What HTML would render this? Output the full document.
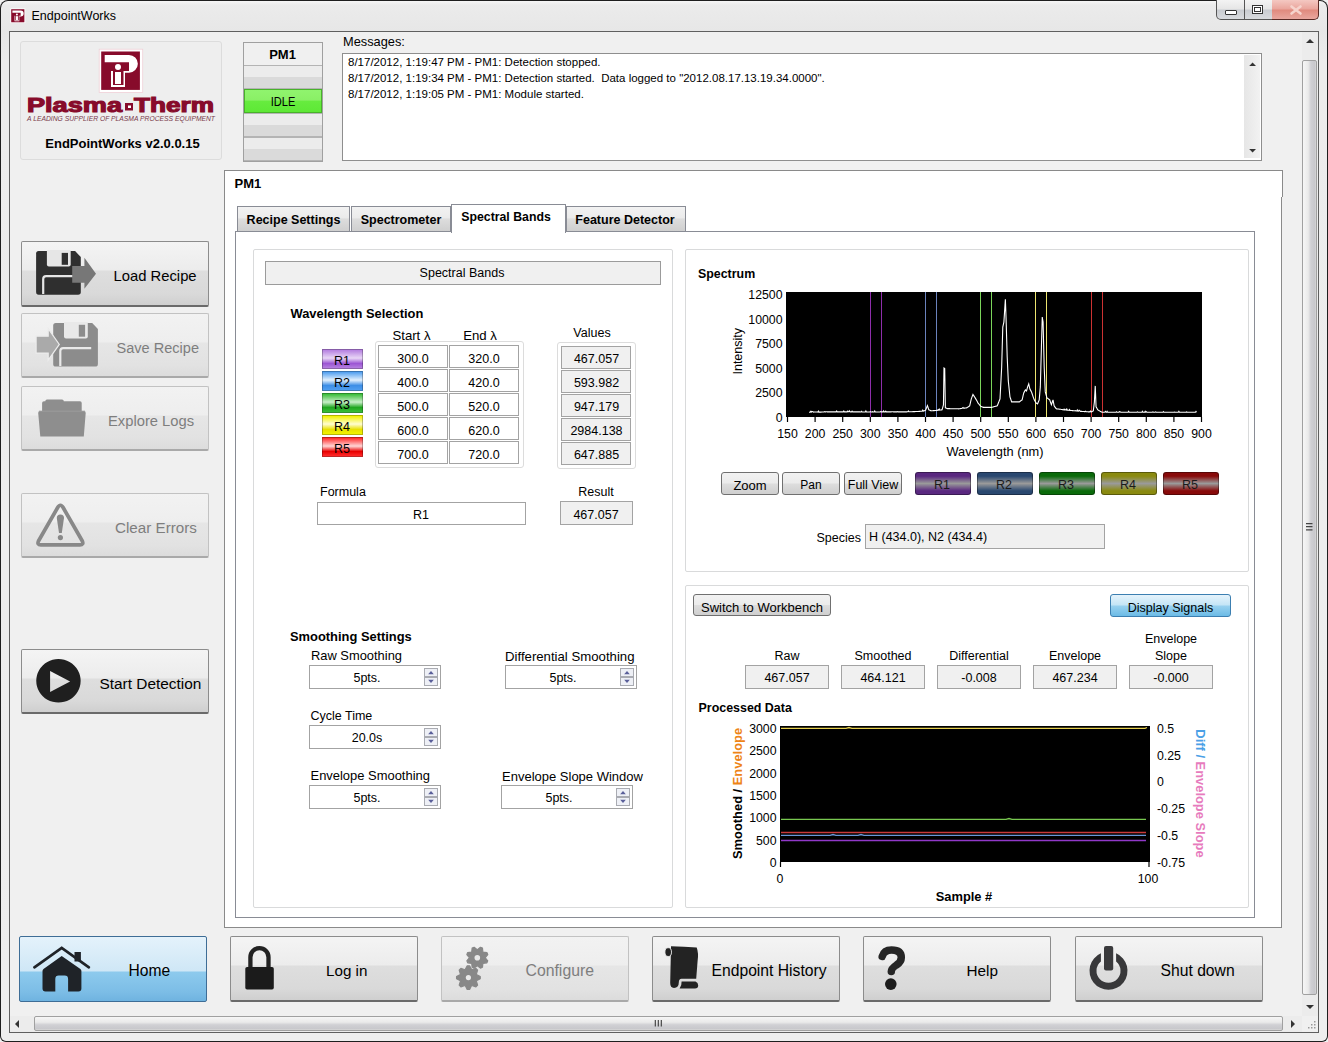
<!DOCTYPE html>
<html><head><meta charset="utf-8"><style>
html,body{margin:0;padding:0;width:1328px;height:1042px;overflow:hidden;background:#f0f0f0}
.a{position:absolute;box-sizing:content-box}
.t{font-family:"Liberation Sans", sans-serif;line-height:1;white-space:nowrap}
svg.a{overflow:visible}
</style></head><body>
<div class="a" style="left:0;top:0;width:1328px;height:1042px;background:#1e1e1e;border-radius:8px 8px 6px 6px"></div>
<div class="a" style="left:1px;top:1px;width:1326px;height:1040px;background:linear-gradient(180deg,#f6f6f6 0px,#ebebeb 4px,#e7e7e7 30px,#ececec 60px,#eeeeee 100%);border-radius:7px 7px 5px 5px"></div>
<svg class="a" style="left:10px;top:8px;" width="16" height="16" viewBox="0 0 16 16"><g transform="translate(-0.9,-1.0) scale(0.34)"><rect x="4.2" y="4.2" width="43.5" height="43.2" fill="#fff"/><rect x="6.2" y="6.5" width="38.7" height="38.4" fill="#870b2b"/><path d="M9.7 10 H34 A8.85 8.85 0 0 1 34 27.7 H30 V26 H34 V17.2 H9.7 Z" fill="#fff"/><path d="M16 26 H18 V40 H28.5 V26 H30 V42 H16 Z" fill="#fff"/><rect x="20" y="27" width="6" height="12" fill="#fff"/><circle cx="23" cy="22" r="3" fill="#fff"/></g></svg>
<div class="a t" style="left:31.5px;top:9.72px;font-size:12.5px;font-weight:normal;color:#000;">EndpointWorks</div>
<div class="a" style="left:1216px;top:0px;width:55px;height:19px;border:1px solid #555;border-top:none;border-radius:0 0 0 5px;background:linear-gradient(180deg,#f3f3f3 0,#e6e6e6 9px,#c9ccd1 10px,#d9dbde 100%)"></div>
<div class="a" style="left:1244px;top:0px;width:1px;height:20px;background:#555"></div>
<div class="a" style="left:1272px;top:0px;width:46px;height:19px;border:1px solid #5a2a25;border-top:none;border-left:none;border-radius:0 0 5px 0;background:linear-gradient(180deg,#f4c8c2 0,#eaa59c 9px,#e08a7e 10px,#e9a79e 100%)"></div>
<div class="a" style="left:1225px;top:10px;width:10px;height:3px;border:1px solid #333;background:#fff;border-radius:1px"></div>
<div class="a" style="left:1252px;top:5px;width:9px;height:7px;border:1px solid #333;background:#fff"></div>
<div class="a" style="left:1254px;top:7px;width:5px;height:3px;border:1px solid #333;background:#fff"></div>
<svg class="a" style="left:1290px;top:5px;" width="12" height="10" viewBox="0 0 12 10"><path d="M1.5 1.5 L10.5 8.5 M10.5 1.5 L1.5 8.5" stroke="#f6d3cc" stroke-width="2.6" stroke-linecap="round"/></svg>
<div class="a" style="left:9px;top:31px;width:1308px;height:1000px;border:1px solid #5f5f5f;background:#f0f0f0"></div>
<div class="a" style="left:20px;top:41px;width:200px;height:117px;border:1px solid #dcdcdc;border-radius:3px;background:#eeeeee"></div>
<svg class="a" style="left:95px;top:45px;" width="52" height="52" viewBox="0 0 52 52"><rect x="4.2" y="4.2" width="43.5" height="43.2" fill="#fff" stroke="#f0d0d8" stroke-width="0.8"/>
<rect x="6.2" y="6.5" width="38.7" height="38.4" fill="#870b2b"/>
<path d="M9.7 10 H34 A8.85 8.85 0 0 1 34 27.7 H30 V26 H34 V17.2 H9.7 Z" fill="#fff"/>
<path d="M16 26 H18 V40 H28.5 V26 H30 V42 H16 Z" fill="#fff"/>
<rect x="20" y="27" width="6" height="12" fill="#fff"/>
<circle cx="23" cy="22" r="3" fill="#fff"/></svg>
<svg class="a" style="left:0px;top:90px;" width="240" height="40" viewBox="0 0 240 40"><text x="27" y="22" font-family="Liberation Sans" font-weight="bold" font-size="19.5" fill="#870b2b" stroke="#870b2b" stroke-width="1.1" textLength="95" lengthAdjust="spacingAndGlyphs">Plasma</text>
<rect x="125" y="13" width="8" height="7.5" fill="#870b2b"/><rect x="128" y="15.5" width="3" height="2.5" fill="#fff"/>
<text x="134" y="22" font-family="Liberation Sans" font-weight="bold" font-size="19.5" fill="#870b2b" stroke="#870b2b" stroke-width="1.1" textLength="80" lengthAdjust="spacingAndGlyphs">Therm</text>
<text x="27" y="31" font-family="Liberation Sans" font-style="italic" font-size="7" fill="#7a3a4a" textLength="188" lengthAdjust="spacingAndGlyphs">A LEADING SUPPLIER OF PLASMA PROCESS EQUIPMENT</text></svg>
<div class="a t" style="left:22.50px;width:200px;text-align:center;top:137.00px;font-size:13px;font-weight:bold;color:#000;">EndPointWorks v2.0.0.15</div>
<div class="a" style="left:243px;top:42px;width:78px;height:118px;border:1px solid #a0a0a0;background:#b4b4b4"></div>
<div class="a" style="left:244px;top:43px;width:78px;height:22px;background:#f0f0f0"></div>
<div class="a t" style="left:242.50px;width:80px;text-align:center;top:48.00px;font-size:13px;font-weight:bold;color:#000;">PM1</div>
<div class="a" style="left:244px;top:66px;width:78px;height:22px;background:linear-gradient(180deg,#ececec 0,#ececec 50%,#dadada 50%,#dadada 100%)"></div>
<div class="a" style="left:244px;top:89px;width:76px;height:22px;border:1px solid #48b22a;background:linear-gradient(180deg,#90f46e 0,#8af066 45%,#66ec3e 52%,#5ee836 100%)"></div>
<div class="a t" style="left:242.50px;width:80px;text-align:center;top:95.84px;font-size:12px;font-weight:normal;color:#000;transform:scaleX(0.92)">IDLE</div>
<div class="a" style="left:244px;top:114px;width:78px;height:22px;background:linear-gradient(180deg,#ececec 0,#ececec 50%,#dadada 50%,#dadada 100%)"></div>
<div class="a" style="left:244px;top:138px;width:78px;height:22px;background:linear-gradient(180deg,#ececec 0,#ececec 50%,#dadada 50%,#dadada 100%)"></div>
<div class="a t" style="left:343px;top:36.16px;font-size:12.8px;font-weight:normal;color:#000;">Messages:</div>
<div class="a" style="left:342px;top:53px;width:918px;height:106px;border:1px solid #8e8e8e;background:#fff"></div>
<div class="a" style="left:1244px;top:55px;width:16px;height:103px;background:linear-gradient(90deg,#e6e6e6,#f2f2f2)"></div>
<svg class="a" style="left:1248px;top:60px;" width="10" height="8" viewBox="0 0 10 8"><path d="M1.2 6 L4.6 2.4 L8 6 Z" fill="#333"/></svg>
<svg class="a" style="left:1248px;top:147px;" width="10" height="8" viewBox="0 0 10 8"><path d="M1.2 2 L4.6 5.6 L8 2 Z" fill="#333"/></svg>
<div class="a t" style="left:348px;top:57.27px;font-size:11.5px;font-weight:normal;color:#000;">8/17/2012, 1:19:47 PM - PM1: Detection stopped.</div>
<div class="a t" style="left:348px;top:73.27px;font-size:11.5px;font-weight:normal;color:#000;">8/17/2012, 1:19:34 PM - PM1: Detection started.&nbsp; Data logged to "2012.08.17.13.19.34.0000".</div>
<div class="a t" style="left:348px;top:89.27px;font-size:11.5px;font-weight:normal;color:#000;">8/17/2012, 1:19:05 PM - PM1: Module started.</div>
<div class="a" style="left:21px;top:241px;width:186px;height:63px;border:1px solid #8c8c8c;border-bottom:2px solid #6a6a6a;border-radius:2px;background:linear-gradient(180deg,#f4f4f4 0,#ececec 28px,#dedede 29px,#d9d9d9 52px,#cfcfcf 100%)"></div>
<div class="a" style="left:21px;top:313px;width:186px;height:62px;border:1px solid #c2c2c2;border-bottom:2px solid #a9a9a9;border-radius:2px;background:linear-gradient(180deg,#f2f2f2 0,#eeeeee 28px,#e6e6e6 29px,#e2e2e2 51px,#dcdcdc 100%)"></div>
<div class="a" style="left:21px;top:386px;width:186px;height:62px;border:1px solid #c2c2c2;border-bottom:2px solid #a9a9a9;border-radius:2px;background:linear-gradient(180deg,#f2f2f2 0,#eeeeee 28px,#e6e6e6 29px,#e2e2e2 51px,#dcdcdc 100%)"></div>
<div class="a" style="left:21px;top:493px;width:186px;height:62px;border:1px solid #c2c2c2;border-bottom:2px solid #a9a9a9;border-radius:2px;background:linear-gradient(180deg,#f2f2f2 0,#eeeeee 28px,#e6e6e6 29px,#e2e2e2 51px,#dcdcdc 100%)"></div>
<div class="a" style="left:21px;top:649px;width:186px;height:62px;border:1px solid #8c8c8c;border-bottom:2px solid #6a6a6a;border-radius:2px;background:linear-gradient(180deg,#f4f4f4 0,#ececec 28px,#dedede 29px,#d9d9d9 51px,#cfcfcf 100%)"></div>
<svg class="a" style="left:30px;top:245px;" width="70" height="55" viewBox="0 0 70 55"><g transform="translate(6.1,6.1)"><path d="M2.5 0 H39 L44.7 6 V41 Q44.7 43.6 42 43.6 H2.5 Q0 43.6 0 41 V2.5 Q0 0 2.5 0 Z" fill="#2f2f2f"/>
<path d="M10.8 -1 H34.6 V13.5 Q34.6 15.5 32.6 15.5 H12.8 Q10.8 15.5 10.8 13.5 Z" fill="#e6e6e6"/>
<rect x="25.6" y="1.8" width="6.3" height="11.9" fill="#2f2f2f"/>
<path d="M7.1 43 V28 Q7.1 25.1 10 25.1 H37" fill="none" stroke="#e6e6e6" stroke-width="2.2"/></g><path d="M42.2 20.9 H54.4 V12.7 L66 28.8 L54.4 43.8 V37.8 H42.2 Z" fill="#777"/></svg>
<div class="a t" style="left:113.5px;top:269.47px;font-size:14.8px;font-weight:normal;color:#000;">Load Recipe</div>
<svg class="a" style="left:30px;top:318px;" width="70" height="55" viewBox="0 0 70 55"><g transform="translate(23.2,5)"><path d="M2.5 0 H39 L44.7 6 V41 Q44.7 43.6 42 43.6 H2.5 Q0 43.6 0 41 V2.5 Q0 0 2.5 0 Z" fill="#8c8c8c"/>
<path d="M10.8 -1 H34.6 V13.5 Q34.6 15.5 32.6 15.5 H12.8 Q10.8 15.5 10.8 13.5 Z" fill="#e9e9e9"/>
<rect x="25.6" y="1.8" width="6.3" height="11.9" fill="#8c8c8c"/>
<path d="M7.1 43 V28 Q7.1 25.1 10 25.1 H38" fill="none" stroke="#e9e9e9" stroke-width="2.2"/></g><path d="M6.1 18.2 H18.2 V10.6 L29.3 26.4 L18.2 42.2 V35.1 H6.1 Z" fill="#aaa" stroke="#ececec" stroke-width="1.2" stroke-linejoin="miter"/></svg>
<div class="a t" style="left:116.5px;top:340.68px;font-size:14.55px;font-weight:normal;color:#7e7e7e;">Save Recipe</div>
<svg class="a" style="left:30px;top:390px;" width="60" height="55" viewBox="0 0 60 55"><path d="M12.1 21 V13 Q12.1 11.3 14 11.3 H15.3 Q15.3 9.5 17 9.5 H32 Q33.8 9.5 33.8 11.3 H50 Q51.7 11.3 51.7 13 V21 H54 Q55.7 21 55.7 23 L53.8 46.4 H10.3 L8.2 23 Q8.2 21 10 21 Z" fill="#8e8e8e"/><path d="M9 21.2 H55" stroke="#9c9c9c" stroke-width="1"/></svg>
<div class="a t" style="left:108px;top:413.51px;font-size:14.75px;font-weight:normal;color:#7e7e7e;">Explore Logs</div>
<svg class="a" style="left:30px;top:497px;" width="60" height="55" viewBox="0 0 60 55"><path d="M27.4 11 Q30.4 5.5 33.4 11 L52.3 44 Q54 47.9 50 47.9 H10.8 Q6.8 47.9 8.5 44 Z" fill="none" stroke="#888" stroke-width="3.7" stroke-linejoin="round"/><path d="M30.4 17.4 Q34 17.4 34 21 L31.8 36.1 H29 L26.8 21 Q26.8 17.4 30.4 17.4 Z" fill="#888"/><circle cx="30.4" cy="40.6" r="2.6" fill="#888"/></svg>
<div class="a t" style="left:115px;top:520.13px;font-size:15.2px;font-weight:normal;color:#7e7e7e;">Clear Errors</div>
<svg class="a" style="left:30px;top:654px;" width="60" height="55" viewBox="0 0 60 55"><path d="M28.5 5 A22.2 21.8 0 1 1 28.4 5 Z M20.1 16.9 L40.1 27.4 L20.1 38 Z" fill="#1f1f1f" fill-rule="evenodd"/></svg>
<div class="a t" style="left:99.5px;top:675.96px;font-size:15.4px;font-weight:normal;color:#000;">Start Detection</div>
<div class="a" style="left:19px;top:936px;width:186px;height:64px;border:1px solid #3e6d96;border-radius:2px;background:linear-gradient(180deg,#e4f2fb 0,#cfe7f6 34px,#8dcaed 35px,#7cbde6 55px,#6fb3e0 100%)"></div>
<svg class="a" style="left:28px;top:940px;" width="70" height="58" viewBox="0 0 70 58"><path d="M6.4 27.3 L33.7 7.8 L60.9 27.3" fill="none" stroke="#1f2328" stroke-width="2.7" stroke-linecap="round" stroke-linejoin="miter"/><rect x="46.5" y="12" width="6.4" height="9.5" fill="#1f2328"/><path d="M14.5 31 Q14.5 29.8 15.5 29 L33.7 16.1 L52.4 29 Q53.4 29.8 53.4 31 V48.5 Q53.4 51.5 50.4 51.5 H40.1 V39 Q40.1 35.6 36.7 35.6 H30.7 Q27.3 35.6 27.3 39 V51.5 H17.5 Q14.5 51.5 14.5 48.5 Z" fill="#1f2328"/></svg>
<div class="a t" style="left:128.5px;top:962.79px;font-size:15.6px;font-weight:normal;color:#000;">Home</div>
<div class="a" style="left:230px;top:936px;width:186px;height:63px;border:1px solid #8c8c8c;border-bottom:2px solid #6a6a6a;border-radius:2px;background:linear-gradient(180deg,#f4f4f4 0,#ececec 28px,#dedede 29px,#d9d9d9 52px,#cfcfcf 100%)"></div>
<svg class="a" style="left:238px;top:940px;" width="44" height="56" viewBox="0 0 44 56"><path d="M12.4 28 V17.2 A9.05 9.05 0 0 1 30.5 17.2 V28" fill="none" stroke="#222" stroke-width="4.3"/><rect x="7.3" y="26.9" width="28.5" height="22.6" rx="1.8" fill="#1b1b1b"/></svg>
<div class="a t" style="left:326px;top:963.13px;font-size:15.2px;font-weight:normal;color:#000;">Log in</div>
<div class="a" style="left:441px;top:936px;width:186px;height:63px;border:1px solid #c2c2c2;border-bottom:2px solid #a9a9a9;border-radius:2px;background:linear-gradient(180deg,#f2f2f2 0,#eeeeee 28px,#e6e6e6 29px,#e2e2e2 52px,#dcdcdc 100%)"></div>
<svg class="a" style="left:448px;top:940px;" width="52" height="56" viewBox="0 0 52 56"><polygon points="37.30,17.80 39.74,20.85 38.90,22.86 35.03,23.28 34.88,23.43 34.46,27.30 32.45,28.14 29.40,25.70 29.20,25.70 26.15,28.14 24.14,27.30 23.72,23.43 23.57,23.28 19.70,22.86 18.86,20.85 21.30,17.80 21.30,17.60 18.86,14.55 19.70,12.54 23.57,12.12 23.72,11.97 24.14,8.10 26.15,7.26 29.20,9.70 29.40,9.70 32.45,7.26 34.46,8.10 34.88,11.97 35.03,12.12 38.90,12.54 39.74,14.55 37.30,17.60" fill="#888" stroke="#888" stroke-width="1.2" stroke-linejoin="round"/><circle cx="29.3" cy="17.7" r="2.8" fill="#e9e9e9"/><polygon points="28.39,34.41 32.24,36.41 32.24,38.79 28.39,40.79 28.30,40.99 29.61,45.13 27.93,46.81 23.79,45.50 23.59,45.59 21.59,49.44 19.21,49.44 17.21,45.59 17.01,45.50 12.87,46.81 11.19,45.13 12.50,40.99 12.41,40.79 8.56,38.79 8.56,36.41 12.41,34.41 12.50,34.21 11.19,30.07 12.87,28.39 17.01,29.70 17.21,29.61 19.21,25.76 21.59,25.76 23.59,29.61 23.79,29.70 27.93,28.39 29.61,30.07 28.30,34.21" fill="#888" stroke="#888" stroke-width="1.2" stroke-linejoin="round"/><circle cx="20.4" cy="37.6" r="2.6" fill="#e9e9e9"/></svg>
<div class="a t" style="left:525.5px;top:962.63px;font-size:15.8px;font-weight:normal;color:#7e7e7e;">Configure</div>
<div class="a" style="left:652px;top:936px;width:186px;height:63px;border:1px solid #8c8c8c;border-bottom:2px solid #6a6a6a;border-radius:2px;background:linear-gradient(180deg,#f4f4f4 0,#ececec 28px,#dedede 29px,#d9d9d9 52px,#cfcfcf 100%)"></div>
<svg class="a" style="left:658px;top:940px;" width="48" height="56" viewBox="0 0 48 56"><path d="M13 6.2 Q26 6.4 38.7 7.5 Q40.8 13 39.6 21 L38.2 38.7 H23.5 Q20.8 38.7 20.8 42.5 Q20.8 47.9 16 47.9 Q12.2 47.9 12.2 43 L13 6.2 Z" fill="#232323"/><ellipse cx="10.2" cy="12.1" rx="3.3" ry="4.4" fill="#232323" stroke="#eee" stroke-width="0.9"/><path d="M21.6 48.5 Q23.8 46 23.6 41.6 H37.5 Q40.2 42.6 40.2 45.5 Q40.2 48.5 37 48.5 Z" fill="#232323"/></svg>
<div class="a t" style="left:711.5px;top:962.71px;font-size:15.7px;font-weight:normal;color:#000;">Endpoint History</div>
<div class="a" style="left:863px;top:936px;width:186px;height:63px;border:1px solid #8c8c8c;border-bottom:2px solid #6a6a6a;border-radius:2px;background:linear-gradient(180deg,#f4f4f4 0,#ececec 28px,#dedede 29px,#d9d9d9 52px,#cfcfcf 100%)"></div>
<svg class="a" style="left:868px;top:940px;" width="48" height="56" viewBox="0 0 48 56"><path d="M14.2 16.5 Q16 10 23.5 10 Q33.3 10 33.3 17.5 Q33.3 22 28.5 25 Q23.3 28.5 23.3 31.5" fill="none" stroke="#262626" stroke-width="7.5" stroke-linecap="round"/><circle cx="22.8" cy="44.1" r="5.8" fill="#1c1c1c"/></svg>
<div class="a t" style="left:966.5px;top:963.05px;font-size:15.3px;font-weight:normal;color:#000;">Help</div>
<div class="a" style="left:1075px;top:936px;width:186px;height:63px;border:1px solid #8c8c8c;border-bottom:2px solid #6a6a6a;border-radius:2px;background:linear-gradient(180deg,#f4f4f4 0,#ececec 28px,#dedede 29px,#d9d9d9 52px,#cfcfcf 100%)"></div>
<svg class="a" style="left:1082px;top:940px;" width="54" height="56" viewBox="0 0 54 56"><path d="M18.9 13.34 A19 19 0 1 0 34.1 13.34 L34.1 21.47 A12 12 0 1 1 18.9 21.47 Z" fill="#38383a"/><rect x="22" y="5.9" width="9.2" height="24.7" rx="2" fill="#3a3a3c"/></svg>
<div class="a t" style="left:1160.5px;top:962.71px;font-size:15.7px;font-weight:normal;color:#000;">Shut down</div>
<div class="a" style="left:224px;top:170px;width:1056px;height:756px;border:1px solid #8a8a8a;background:#fff"></div>
<div class="a" style="left:1280px;top:170px;width:2px;height:26px;border:1px solid #8a8a8a;border-left:none;border-bottom:none;background:#fff"></div>
<div class="a t" style="left:234.5px;top:177.00px;font-size:13px;font-weight:bold;color:#000;">PM1</div>
<div class="a" style="left:235px;top:231px;width:1018px;height:685px;border:1px solid #898c95;background:#fff"></div>
<div class="a" style="left:237px;top:206px;width:111px;height:24px;border:1px solid #898c95;border-bottom:none;background:linear-gradient(180deg,#f2f2f2 0,#ebebeb 45%,#dddddd 50%,#cfcfcf 100%)"></div>
<div class="a t" style="left:237.00px;width:113px;text-align:center;top:214.42px;font-size:12.5px;font-weight:bold;color:#000;">Recipe Settings</div>
<div class="a" style="left:351px;top:206px;width:98px;height:24px;border:1px solid #898c95;border-bottom:none;background:linear-gradient(180deg,#f2f2f2 0,#ebebeb 45%,#dddddd 50%,#cfcfcf 100%)"></div>
<div class="a t" style="left:351.00px;width:100px;text-align:center;top:214.42px;font-size:12.5px;font-weight:bold;color:#000;">Spectrometer</div>
<div class="a" style="left:566px;top:206px;width:118px;height:24px;border:1px solid #898c95;border-bottom:none;background:linear-gradient(180deg,#f2f2f2 0,#ebebeb 45%,#dddddd 50%,#cfcfcf 100%)"></div>
<div class="a t" style="left:565.00px;width:120px;text-align:center;top:214.42px;font-size:12.5px;font-weight:bold;color:#000;">Feature Detector</div>
<div class="a" style="left:451px;top:204px;width:113px;height:28px;border:1px solid #898c95;border-bottom:none;background:#fff;z-index:2"></div>
<div class="a t" style="left:448.50px;width:115px;text-align:center;top:210.59px;font-size:12.3px;font-weight:bold;color:#000;z-index:3">Spectral Bands</div>
<div class="a" style="left:253px;top:249px;width:418px;height:657px;border:1px solid #d9dadb;border-radius:2px;background:#fff"></div>
<div class="a" style="left:265px;top:261px;width:394px;height:22px;border:1px solid #9b9b9b;background:#f0f0f0"></div>
<div class="a t" style="left:312.00px;width:300px;text-align:center;top:267.42px;font-size:12.5px;font-weight:normal;color:#000;">Spectral Bands</div>
<div class="a t" style="left:290.5px;top:308.08px;font-size:12.9px;font-weight:bold;color:#000;">Wavelength Selection</div>
<div class="a t" style="left:361.50px;width:100px;text-align:center;top:328.83px;font-size:13.2px;font-weight:normal;color:#000;">Start &#955;</div>
<div class="a t" style="left:430.00px;width:100px;text-align:center;top:328.83px;font-size:13.2px;font-weight:normal;color:#000;">End &#955;</div>
<div class="a t" style="left:542.00px;width:100px;text-align:center;top:327.42px;font-size:12.5px;font-weight:normal;color:#000;">Values</div>
<div class="a" style="left:322px;top:349px;width:39px;height:18px;border:1px solid rgba(0,0,0,0.25);background:linear-gradient(180deg,#b57fe0 0,#e8d6f6 45%,#9c56d4 75%,#b57fe0 100%)"></div>
<div class="a t" style="left:322.00px;width:40px;text-align:center;top:354.62px;font-size:12.5px;font-weight:normal;color:#000;">R1</div>
<div class="a" style="left:322px;top:371px;width:39px;height:18px;border:1px solid rgba(0,0,0,0.25);background:linear-gradient(180deg,#4f9ef0 0,#e2f0fd 45%,#3d8ee6 75%,#4f9ef0 100%)"></div>
<div class="a t" style="left:322.00px;width:40px;text-align:center;top:376.62px;font-size:12.5px;font-weight:normal;color:#000;">R2</div>
<div class="a" style="left:322px;top:393px;width:39px;height:18px;border:1px solid rgba(0,0,0,0.25);background:linear-gradient(180deg,#39bd39 0,#c9efc9 45%,#21a621 75%,#39bd39 100%)"></div>
<div class="a t" style="left:322.00px;width:40px;text-align:center;top:398.62px;font-size:12.5px;font-weight:normal;color:#000;">R3</div>
<div class="a" style="left:322px;top:415px;width:39px;height:18px;border:1px solid rgba(0,0,0,0.25);background:linear-gradient(180deg,#f2f200 0,#fffdd0 45%,#e8e000 75%,#f2f200 100%)"></div>
<div class="a t" style="left:322.00px;width:40px;text-align:center;top:420.62px;font-size:12.5px;font-weight:normal;color:#000;">R4</div>
<div class="a" style="left:322px;top:437px;width:39px;height:18px;border:1px solid rgba(0,0,0,0.25);background:linear-gradient(180deg,#ff2a2a 0,#ffd6d6 45%,#e80000 75%,#ff2a2a 100%)"></div>
<div class="a t" style="left:322.00px;width:40px;text-align:center;top:442.62px;font-size:12.5px;font-weight:normal;color:#000;">R5</div>
<div class="a" style="left:375px;top:341px;width:147px;height:125px;border:1px solid #dcdcdc;border-radius:3px;background:#fff"></div>
<div class="a" style="left:378px;top:345px;width:68px;height:21px;border:1.5px solid #a3a3a3;background:#fff"></div>
<div class="a" style="left:449px;top:345px;width:68px;height:21px;border:1.5px solid #a3a3a3;background:#fff"></div>
<div class="a t" style="left:378.00px;width:70px;text-align:center;top:352.72px;font-size:12.5px;font-weight:normal;color:#000;">300.0</div>
<div class="a t" style="left:449.00px;width:70px;text-align:center;top:352.72px;font-size:12.5px;font-weight:normal;color:#000;">320.0</div>
<div class="a" style="left:378px;top:369px;width:68px;height:21px;border:1.5px solid #a3a3a3;background:#fff"></div>
<div class="a" style="left:449px;top:369px;width:68px;height:21px;border:1.5px solid #a3a3a3;background:#fff"></div>
<div class="a t" style="left:378.00px;width:70px;text-align:center;top:376.72px;font-size:12.5px;font-weight:normal;color:#000;">400.0</div>
<div class="a t" style="left:449.00px;width:70px;text-align:center;top:376.72px;font-size:12.5px;font-weight:normal;color:#000;">420.0</div>
<div class="a" style="left:378px;top:393px;width:68px;height:21px;border:1.5px solid #a3a3a3;background:#fff"></div>
<div class="a" style="left:449px;top:393px;width:68px;height:21px;border:1.5px solid #a3a3a3;background:#fff"></div>
<div class="a t" style="left:378.00px;width:70px;text-align:center;top:400.72px;font-size:12.5px;font-weight:normal;color:#000;">500.0</div>
<div class="a t" style="left:449.00px;width:70px;text-align:center;top:400.72px;font-size:12.5px;font-weight:normal;color:#000;">520.0</div>
<div class="a" style="left:378px;top:417px;width:68px;height:21px;border:1.5px solid #a3a3a3;background:#fff"></div>
<div class="a" style="left:449px;top:417px;width:68px;height:21px;border:1.5px solid #a3a3a3;background:#fff"></div>
<div class="a t" style="left:378.00px;width:70px;text-align:center;top:424.72px;font-size:12.5px;font-weight:normal;color:#000;">600.0</div>
<div class="a t" style="left:449.00px;width:70px;text-align:center;top:424.72px;font-size:12.5px;font-weight:normal;color:#000;">620.0</div>
<div class="a" style="left:378px;top:441px;width:68px;height:21px;border:1.5px solid #a3a3a3;background:#fff"></div>
<div class="a" style="left:449px;top:441px;width:68px;height:21px;border:1.5px solid #a3a3a3;background:#fff"></div>
<div class="a t" style="left:378.00px;width:70px;text-align:center;top:448.72px;font-size:12.5px;font-weight:normal;color:#000;">700.0</div>
<div class="a t" style="left:449.00px;width:70px;text-align:center;top:448.72px;font-size:12.5px;font-weight:normal;color:#000;">720.0</div>
<div class="a" style="left:557px;top:342px;width:77px;height:125px;border:1px solid #dcdcdc;border-radius:3px;background:#fff"></div>
<div class="a" style="left:561px;top:346px;width:68px;height:21px;border:1.5px solid #a3a3a3;background:#f0f0f0"></div>
<div class="a t" style="left:556.50px;width:80px;text-align:center;top:353.42px;font-size:12.5px;font-weight:normal;color:#000;">467.057</div>
<div class="a" style="left:561px;top:370px;width:68px;height:21px;border:1.5px solid #a3a3a3;background:#f0f0f0"></div>
<div class="a t" style="left:556.50px;width:80px;text-align:center;top:377.42px;font-size:12.5px;font-weight:normal;color:#000;">593.982</div>
<div class="a" style="left:561px;top:394px;width:68px;height:21px;border:1.5px solid #a3a3a3;background:#f0f0f0"></div>
<div class="a t" style="left:556.50px;width:80px;text-align:center;top:401.42px;font-size:12.5px;font-weight:normal;color:#000;">947.179</div>
<div class="a" style="left:561px;top:418px;width:68px;height:21px;border:1.5px solid #a3a3a3;background:#f0f0f0"></div>
<div class="a t" style="left:556.50px;width:80px;text-align:center;top:425.42px;font-size:12.5px;font-weight:normal;color:#000;">2984.138</div>
<div class="a" style="left:561px;top:442px;width:68px;height:21px;border:1.5px solid #a3a3a3;background:#f0f0f0"></div>
<div class="a t" style="left:556.50px;width:80px;text-align:center;top:449.42px;font-size:12.5px;font-weight:normal;color:#000;">647.885</div>
<div class="a t" style="left:320px;top:486.42px;font-size:12.5px;font-weight:normal;color:#000;">Formula</div>
<div class="a" style="left:317px;top:502px;width:207px;height:21px;border:1px solid #a3a3a3;background:#fff"></div>
<div class="a t" style="left:371.00px;width:100px;text-align:center;top:508.92px;font-size:12.5px;font-weight:normal;color:#000;">R1</div>
<div class="a t" style="left:546.00px;width:100px;text-align:center;top:486.42px;font-size:12.5px;font-weight:normal;color:#000;">Result</div>
<div class="a" style="left:560px;top:501px;width:71px;height:22px;border:1px solid #a3a3a3;background:#f0f0f0"></div>
<div class="a t" style="left:556.00px;width:80px;text-align:center;top:508.92px;font-size:12.5px;font-weight:normal;color:#000;">467.057</div>
<div class="a t" style="left:290px;top:630.58px;font-size:12.9px;font-weight:bold;color:#000;">Smoothing Settings</div>
<div class="a t" style="left:311px;top:650.08px;font-size:12.9px;font-weight:normal;color:#000;">Raw Smoothing</div>
<div class="a" style="left:309px;top:665px;width:130px;height:22px;border:1px solid #a3a3a3;background:#fff"></div>
<div class="a t" style="left:301.00px;width:132px;text-align:center;top:672.42px;font-size:12.5px;font-weight:normal;color:#000;">5pts.</div>
<div class="a" style="left:424px;top:668px;width:12px;height:7px;border:1px solid #a9abb2;background:#eef0f6"></div>
<div class="a" style="left:424px;top:677px;width:12px;height:7px;border:1px solid #a9abb2;background:#eef0f6"></div>
<svg class="a" style="left:427px;top:670px;" width="8" height="5" viewBox="0 0 8 5"><path d="M1.2 4.2 L4 1 L6.8 4.2 Z" fill="#5a5f9a"/></svg>
<svg class="a" style="left:427px;top:679px;" width="8" height="5" viewBox="0 0 8 5"><path d="M1.2 0.8 L4 4 L6.8 0.8 Z" fill="#5a5f9a"/></svg>
<div class="a t" style="left:505px;top:649.83px;font-size:13.2px;font-weight:normal;color:#000;">Differential Smoothing</div>
<div class="a" style="left:505px;top:665px;width:130px;height:22px;border:1px solid #a3a3a3;background:#fff"></div>
<div class="a t" style="left:497.00px;width:132px;text-align:center;top:672.42px;font-size:12.5px;font-weight:normal;color:#000;">5pts.</div>
<div class="a" style="left:620px;top:668px;width:12px;height:7px;border:1px solid #a9abb2;background:#eef0f6"></div>
<div class="a" style="left:620px;top:677px;width:12px;height:7px;border:1px solid #a9abb2;background:#eef0f6"></div>
<svg class="a" style="left:623px;top:670px;" width="8" height="5" viewBox="0 0 8 5"><path d="M1.2 4.2 L4 1 L6.8 4.2 Z" fill="#5a5f9a"/></svg>
<svg class="a" style="left:623px;top:679px;" width="8" height="5" viewBox="0 0 8 5"><path d="M1.2 0.8 L4 4 L6.8 0.8 Z" fill="#5a5f9a"/></svg>
<div class="a t" style="left:310.5px;top:710.42px;font-size:12.5px;font-weight:normal;color:#000;">Cycle Time</div>
<div class="a" style="left:309px;top:725px;width:130px;height:22px;border:1px solid #a3a3a3;background:#fff"></div>
<div class="a t" style="left:301.00px;width:132px;text-align:center;top:732.42px;font-size:12.5px;font-weight:normal;color:#000;">20.0s</div>
<div class="a" style="left:424px;top:728px;width:12px;height:7px;border:1px solid #a9abb2;background:#eef0f6"></div>
<div class="a" style="left:424px;top:737px;width:12px;height:7px;border:1px solid #a9abb2;background:#eef0f6"></div>
<svg class="a" style="left:427px;top:730px;" width="8" height="5" viewBox="0 0 8 5"><path d="M1.2 4.2 L4 1 L6.8 4.2 Z" fill="#5a5f9a"/></svg>
<svg class="a" style="left:427px;top:739px;" width="8" height="5" viewBox="0 0 8 5"><path d="M1.2 0.8 L4 4 L6.8 0.8 Z" fill="#5a5f9a"/></svg>
<div class="a t" style="left:310.5px;top:770.04px;font-size:12.95px;font-weight:normal;color:#000;">Envelope Smoothing</div>
<div class="a" style="left:309px;top:785px;width:130px;height:22px;border:1px solid #a3a3a3;background:#fff"></div>
<div class="a t" style="left:301.00px;width:132px;text-align:center;top:792.42px;font-size:12.5px;font-weight:normal;color:#000;">5pts.</div>
<div class="a" style="left:424px;top:788px;width:12px;height:7px;border:1px solid #a9abb2;background:#eef0f6"></div>
<div class="a" style="left:424px;top:797px;width:12px;height:7px;border:1px solid #a9abb2;background:#eef0f6"></div>
<svg class="a" style="left:427px;top:790px;" width="8" height="5" viewBox="0 0 8 5"><path d="M1.2 4.2 L4 1 L6.8 4.2 Z" fill="#5a5f9a"/></svg>
<svg class="a" style="left:427px;top:799px;" width="8" height="5" viewBox="0 0 8 5"><path d="M1.2 0.8 L4 4 L6.8 0.8 Z" fill="#5a5f9a"/></svg>
<div class="a t" style="left:502px;top:770.00px;font-size:13.0px;font-weight:normal;color:#000;">Envelope Slope Window</div>
<div class="a" style="left:501px;top:785px;width:130px;height:22px;border:1px solid #a3a3a3;background:#fff"></div>
<div class="a t" style="left:493.00px;width:132px;text-align:center;top:792.42px;font-size:12.5px;font-weight:normal;color:#000;">5pts.</div>
<div class="a" style="left:616px;top:788px;width:12px;height:7px;border:1px solid #a9abb2;background:#eef0f6"></div>
<div class="a" style="left:616px;top:797px;width:12px;height:7px;border:1px solid #a9abb2;background:#eef0f6"></div>
<svg class="a" style="left:619px;top:790px;" width="8" height="5" viewBox="0 0 8 5"><path d="M1.2 4.2 L4 1 L6.8 4.2 Z" fill="#5a5f9a"/></svg>
<svg class="a" style="left:619px;top:799px;" width="8" height="5" viewBox="0 0 8 5"><path d="M1.2 0.8 L4 4 L6.8 0.8 Z" fill="#5a5f9a"/></svg>
<div class="a" style="left:685px;top:249px;width:562px;height:321px;border:1px solid #d9dadb;border-radius:2px;background:#fff"></div>
<div class="a t" style="left:698px;top:268.00px;font-size:12.4px;font-weight:bold;color:#000;">Spectrum</div>
<div class="a" style="left:786px;top:292px;width:416px;height:125px;background:#000"></div>
<svg class="a" style="left:786px;top:292px;" width="416" height="125" viewBox="0 0 416 125"><line x1="84.5" y1="0" x2="84.5" y2="125" stroke="#8e2eaa" stroke-width="1"/><line x1="95.5" y1="0" x2="95.5" y2="125" stroke="#8e2eaa" stroke-width="1"/><line x1="139.5" y1="0" x2="139.5" y2="125" stroke="#6a82bc" stroke-width="1"/><line x1="150.5" y1="0" x2="150.5" y2="125" stroke="#6a82bc" stroke-width="1"/><line x1="194.5" y1="0" x2="194.5" y2="125" stroke="#7ad45a" stroke-width="1"/><line x1="205.5" y1="0" x2="205.5" y2="125" stroke="#7ad45a" stroke-width="1"/><line x1="249.5" y1="0" x2="249.5" y2="125" stroke="#ece46e" stroke-width="1"/><line x1="260.5" y1="0" x2="260.5" y2="125" stroke="#ece46e" stroke-width="1"/><line x1="305.5" y1="0" x2="305.5" y2="125" stroke="#cc3232" stroke-width="1"/><line x1="316.5" y1="0" x2="316.5" y2="125" stroke="#cc3232" stroke-width="1"/><polyline points="23.03,120.21 23.58,120.20 24.13,120.18 24.68,119.43 25.24,120.14 25.79,119.42 26.34,119.46 26.89,119.72 27.44,120.07 28.00,120.05 28.55,120.03 29.10,120.02 29.65,120.03 30.20,120.04 30.76,120.05 31.31,120.06 31.86,120.07 32.41,119.09 32.96,120.09 33.52,120.10 34.07,120.11 34.62,120.12 35.17,120.09 35.72,120.06 36.28,120.03 36.83,120.00 37.38,119.97 37.93,119.94 38.48,119.56 39.04,119.88 39.59,119.85 40.14,119.82 40.69,119.82 41.24,119.83 41.80,119.83 42.35,119.84 42.90,119.84 43.45,119.85 44.00,119.85 44.56,119.86 45.11,119.86 45.66,119.87 46.21,119.87 46.76,119.88 47.32,119.88 47.87,119.89 48.42,119.89 48.97,119.90 49.52,119.90 50.08,119.91 50.63,119.08 51.18,119.92 51.73,119.91 52.28,119.91 52.84,119.90 53.39,119.90 53.94,119.89 54.49,119.89 55.04,119.88 55.60,119.88 56.15,119.87 56.70,119.87 57.25,119.86 57.80,119.00 58.36,119.85 58.91,119.85 59.46,119.84 60.01,119.84 60.56,119.83 61.12,119.83 61.67,119.15 62.22,119.82 62.77,119.82 63.32,118.91 63.88,119.83 64.43,119.84 64.98,119.84 65.53,119.85 66.08,119.19 66.64,119.86 67.19,119.86 67.74,119.87 68.29,119.87 68.84,119.88 69.40,119.88 69.95,119.89 70.50,119.89 71.05,119.90 71.60,119.90 72.16,119.91 72.71,119.91 73.26,119.92 73.81,119.92 74.36,119.93 74.92,119.93 75.47,119.30 76.02,119.94 76.57,119.95 77.12,119.95 77.68,119.96 78.23,119.96 78.78,119.97 79.33,119.97 79.88,118.96 80.44,119.98 80.99,119.99 81.54,119.99 82.09,120.00 82.64,120.00 83.20,120.01 83.75,120.01 84.30,119.66 84.85,120.01 85.40,120.01 85.96,120.00 86.51,119.70 87.06,119.99 87.61,119.99 88.16,119.98 88.72,118.98 89.27,119.97 89.82,119.97 90.37,119.96 90.92,119.96 91.48,119.95 92.03,119.95 92.58,119.94 93.13,119.94 93.68,119.93 94.24,119.93 94.79,119.54 95.34,119.92 95.89,119.91 96.44,119.91 97.00,119.90 97.55,118.84 98.10,119.89 98.65,119.89 99.20,119.88 99.76,119.16 100.31,119.87 100.86,119.87 101.41,119.86 101.96,119.86 102.52,119.85 103.07,119.85 103.62,119.84 104.17,119.84 104.72,119.83 105.28,119.83 105.83,119.82 106.38,119.82 106.93,119.82 107.48,119.83 108.04,119.83 108.59,119.84 109.14,119.84 109.69,119.85 110.24,119.85 110.80,119.86 111.35,119.54 111.90,119.87 112.45,119.87 113.00,119.88 113.56,119.88 114.11,119.89 114.66,119.89 115.21,119.90 115.76,119.90 116.32,119.91 116.87,119.91 117.42,119.92 117.97,119.90 118.52,119.89 119.08,119.87 119.63,119.86 120.18,119.84 120.73,119.83 121.28,119.81 121.84,119.80 122.39,118.96 122.94,119.77 123.49,119.75 124.04,119.74 124.60,119.72 125.15,119.71 125.70,119.69 126.25,119.68 126.80,119.66 127.36,119.65 127.91,119.63 128.46,119.62 129.01,119.59 129.56,119.56 130.12,119.54 130.67,119.51 131.22,119.48 131.77,119.46 132.32,119.43 132.88,119.40 133.43,119.38 133.98,119.35 134.53,119.32 135.08,119.30 135.64,119.27 136.19,119.24 136.74,118.14 137.29,119.04 137.84,118.86 138.40,118.68 138.95,118.50 139.50,118.32 140.05,116.95 140.60,115.59 141.16,114.22 141.43,113.54 141.71,114.39 142.26,116.11 142.81,117.82 143.36,118.07 143.92,118.32 144.47,118.57 145.02,118.82 145.57,118.78 146.12,118.74 146.68,118.70 147.23,118.66 147.78,118.62 148.33,118.58 148.88,118.54 149.44,118.50 149.99,118.46 150.54,118.42 151.09,118.36 151.64,118.30 152.20,117.59 152.75,118.18 153.30,117.19 153.85,118.06 154.40,118.00 154.96,117.94 155.51,117.88 156.06,117.82 156.61,115.83 157.16,113.84 157.44,112.84 157.72,94.40 157.99,75.96 158.27,76.15 158.71,76.46 158.82,83.02 159.37,115.83 159.92,116.03 160.48,116.23 161.03,116.43 161.58,116.63 162.13,116.64 162.68,116.65 163.24,116.66 163.79,116.67 164.34,116.68 164.89,116.69 165.44,116.70 166.00,116.71 166.55,116.72 167.10,116.73 167.65,116.74 168.20,116.75 168.76,116.76 169.31,116.77 169.86,116.78 170.41,116.79 170.96,116.80 171.52,116.81 172.07,116.82 172.62,116.83 173.17,116.76 173.72,116.69 174.28,116.63 174.83,116.56 175.38,116.49 175.93,116.43 176.48,115.87 177.04,115.46 177.59,116.23 178.14,116.16 178.69,116.09 179.24,116.03 179.80,115.96 180.35,115.90 180.90,115.83 181.45,115.43 182.00,115.03 182.56,114.63 183.11,114.23 183.66,113.84 184.21,111.51 184.76,109.18 185.32,106.86 185.87,105.36 186.42,103.87 186.97,102.37 187.52,103.24 188.08,104.12 188.63,104.99 189.18,105.86 189.73,106.86 190.28,107.85 190.84,108.85 191.39,109.85 191.94,110.84 192.49,111.54 193.04,112.24 193.60,112.94 194.15,113.64 194.70,114.33 195.25,114.53 195.80,114.73 196.36,114.93 196.91,115.13 197.46,115.33 198.01,115.33 198.56,115.33 199.12,115.33 199.67,115.33 200.22,115.33 200.77,115.33 201.32,115.33 201.88,115.33 202.43,115.33 202.98,115.33 203.53,115.33 204.08,115.33 204.64,115.33 205.19,115.33 205.74,115.33 206.29,115.18 206.84,115.03 207.40,114.88 207.95,114.73 208.50,114.58 209.05,114.43 209.60,114.28 210.16,114.13 210.71,113.98 211.26,113.84 211.81,112.44 212.36,111.04 212.92,109.65 213.47,108.25 214.02,106.86 214.57,96.23 215.12,85.59 215.68,74.96 216.23,55.02 216.78,35.09 217.33,32.60 217.88,30.10 218.44,21.61 218.99,13.12 219.37,7.18 219.54,11.78 220.09,27.11 220.64,46.05 221.20,64.99 221.75,76.95 222.30,88.92 222.85,94.23 223.40,99.55 223.96,104.86 224.51,106.53 225.06,108.19 225.61,109.85 226.16,109.85 226.72,109.85 227.27,109.85 227.82,109.85 228.37,109.85 228.92,109.85 229.48,109.85 230.03,109.85 230.58,109.85 231.13,109.85 231.68,109.85 232.24,109.85 232.79,109.85 233.34,109.85 233.89,109.45 234.44,109.05 235.00,108.65 235.55,108.25 236.10,107.85 236.65,105.53 237.20,103.20 237.76,100.88 238.31,99.88 238.86,98.88 239.41,97.89 239.96,98.38 240.52,98.88 241.07,96.89 241.62,94.90 242.17,93.40 242.72,91.91 243.28,94.40 243.83,96.89 244.38,97.89 244.93,98.88 245.48,99.88 246.04,101.54 246.59,103.20 247.14,104.86 247.69,106.36 248.24,107.85 248.80,108.85 249.35,109.85 249.90,110.84 250.45,111.18 251.00,111.51 251.56,111.84 252.11,110.51 252.66,109.18 253.21,107.85 253.76,101.38 254.32,94.90 254.87,74.96 255.42,55.02 255.97,35.09 256.25,25.12 256.52,26.78 257.08,30.10 257.63,52.53 258.18,74.96 258.73,87.42 259.28,99.88 259.84,101.87 260.39,103.87 260.94,105.86 261.49,106.26 262.04,106.66 262.60,107.06 263.15,107.46 263.70,107.85 264.25,109.52 264.80,111.18 265.36,112.84 265.91,111.18 266.46,109.52 267.01,107.85 267.56,110.84 268.12,113.84 268.67,114.58 269.22,115.33 269.77,116.08 270.32,116.83 270.88,116.89 271.43,116.95 271.98,117.01 272.53,117.07 273.08,117.14 273.64,117.20 274.19,117.26 274.74,117.32 275.29,117.42 275.84,117.52 276.40,117.62 276.95,117.72 277.50,117.82 278.05,117.13 278.60,117.92 279.16,117.41 279.71,118.02 280.26,118.07 280.81,117.04 281.36,118.17 281.92,118.22 282.47,118.27 283.02,118.32 283.57,117.45 284.12,118.42 284.68,118.47 285.23,118.52 285.78,118.57 286.33,118.62 286.88,118.67 287.44,118.72 287.99,118.77 288.54,118.82 289.09,118.87 289.64,118.57 290.20,118.97 290.75,119.02 291.30,118.02 291.85,119.12 292.40,119.17 292.96,118.24 293.51,118.28 294.06,119.32 294.61,119.35 295.16,119.39 295.72,119.42 296.27,119.46 296.82,119.49 297.37,119.53 297.92,119.56 298.48,119.60 299.03,119.63 299.58,119.21 300.13,119.70 300.68,119.74 301.24,119.77 301.79,119.81 302.34,119.84 302.89,119.88 303.44,119.91 304.00,119.45 304.55,119.10 305.10,120.02 305.65,119.72 306.20,119.42 306.76,119.12 307.31,118.82 307.86,114.33 308.41,109.85 308.96,99.22 309.24,93.90 309.52,100.88 310.07,114.83 310.62,115.83 311.17,116.83 311.72,117.82 312.28,118.15 312.83,118.49 313.38,118.82 313.93,119.12 314.48,119.42 315.04,119.72 315.59,120.02 316.14,120.31 316.69,120.31 317.24,120.31 317.80,120.31 318.35,120.31 318.90,119.91 319.45,119.42 320.00,120.31 320.56,120.31 321.11,119.34 321.66,120.31 322.21,120.31 322.76,120.31 323.32,120.31 323.87,120.31 324.42,120.31 324.97,120.31 325.52,120.31 326.08,120.31 326.63,120.31 327.18,120.31 327.73,120.31 328.28,120.31 328.84,120.31 329.39,120.31 329.94,120.31 330.49,119.71 331.04,120.31 331.60,120.31 332.15,120.31 332.70,120.31 333.25,119.80 333.80,119.70 334.36,120.00 334.91,120.31 335.46,120.31 336.01,120.31 336.56,120.31 337.12,120.31 337.67,120.31 338.22,120.31 338.77,120.31 339.32,120.31 339.88,120.31 340.43,120.30 340.98,120.30 341.53,120.30 342.08,120.30 342.64,119.33 343.19,120.29 343.74,120.29 344.29,120.29 344.84,120.28 345.40,120.28 345.95,120.28 346.50,120.28 347.05,120.27 347.60,120.27 348.16,120.27 348.71,120.27 349.26,120.26 349.81,120.26 350.36,120.26 350.92,120.26 351.47,119.85 352.02,120.25 352.57,120.25 353.12,120.25 353.68,120.24 354.23,120.24 354.78,120.24 355.33,120.24 355.88,120.23 356.44,119.30 356.99,120.23 357.54,120.23 358.09,120.22 358.64,120.22 359.20,119.33 359.75,120.22 360.30,119.70 360.85,120.22 361.40,120.22 361.96,120.22 362.51,120.22 363.06,120.22 363.61,120.23 364.16,120.23 364.72,120.23 365.27,120.23 365.82,120.23 366.37,120.24 366.92,119.82 367.48,120.24 368.03,120.24 368.58,120.24 369.13,120.25 369.68,119.90 370.24,120.25 370.79,120.25 371.34,120.25 371.89,120.26 372.44,120.26 373.00,120.26 373.55,120.26 374.10,120.26 374.65,120.27 375.20,120.27 375.76,120.27 376.31,120.27 376.86,120.27 377.41,119.61 377.96,120.28 378.52,120.28 379.07,120.28 379.62,120.28 380.17,120.29 380.72,120.29 381.28,120.29 381.83,120.29 382.38,120.29 382.93,120.30 383.48,120.30 384.04,120.30 384.59,120.30 385.14,120.30 385.69,120.31 386.24,120.31 386.80,120.31 387.35,120.31 387.90,120.31 388.45,120.01 389.00,120.31 389.56,120.31 390.11,120.31 390.66,120.31 391.21,120.31 391.76,120.31 392.32,120.31 392.87,119.42 393.42,120.31 393.97,120.31 394.52,120.31 395.08,120.31 395.63,120.31 396.18,120.31 396.73,120.31 397.28,120.31 397.84,120.31 398.39,120.31 398.94,120.31 399.49,120.31 400.04,120.31 400.60,119.93 401.15,120.31 401.70,120.31 402.25,120.31 402.80,120.31 403.36,120.31 403.91,120.31 404.46,120.31 405.01,120.31 405.56,120.31 406.12,120.31 406.67,120.31 407.22,120.31 407.77,120.31 408.32,120.31 408.88,120.31 409.43,120.31 409.98,119.43 410.53,120.31" fill="none" stroke="#fff" stroke-width="1.1" stroke-linejoin="miter"/></svg>
<svg class="a" style="left:780px;top:417px;" width="430" height="6" viewBox="0 0 430 6"><line x1="7.5" y1="0" x2="7.5" y2="5" stroke="#000" stroke-width="1.2"/><line x1="35.1" y1="0" x2="35.1" y2="5" stroke="#000" stroke-width="1.2"/><line x1="62.7" y1="0" x2="62.7" y2="5" stroke="#000" stroke-width="1.2"/><line x1="90.3" y1="0" x2="90.3" y2="5" stroke="#000" stroke-width="1.2"/><line x1="117.9" y1="0" x2="117.9" y2="5" stroke="#000" stroke-width="1.2"/><line x1="145.5" y1="0" x2="145.5" y2="5" stroke="#000" stroke-width="1.2"/><line x1="173.1" y1="0" x2="173.1" y2="5" stroke="#000" stroke-width="1.2"/><line x1="200.7" y1="0" x2="200.7" y2="5" stroke="#000" stroke-width="1.2"/><line x1="228.3" y1="0" x2="228.3" y2="5" stroke="#000" stroke-width="1.2"/><line x1="255.9" y1="0" x2="255.9" y2="5" stroke="#000" stroke-width="1.2"/><line x1="283.5" y1="0" x2="283.5" y2="5" stroke="#000" stroke-width="1.2"/><line x1="311.1" y1="0" x2="311.1" y2="5" stroke="#000" stroke-width="1.2"/><line x1="338.7" y1="0" x2="338.7" y2="5" stroke="#000" stroke-width="1.2"/><line x1="366.3" y1="0" x2="366.3" y2="5" stroke="#000" stroke-width="1.2"/><line x1="393.9" y1="0" x2="393.9" y2="5" stroke="#000" stroke-width="1.2"/><line x1="421.5" y1="0" x2="421.5" y2="5" stroke="#000" stroke-width="1.2"/></svg>
<div class="a t" style="left:767.50px;width:40px;text-align:center;top:427.59px;font-size:12.3px;font-weight:normal;color:#000;">150</div>
<div class="a t" style="left:795.10px;width:40px;text-align:center;top:427.59px;font-size:12.3px;font-weight:normal;color:#000;">200</div>
<div class="a t" style="left:822.70px;width:40px;text-align:center;top:427.59px;font-size:12.3px;font-weight:normal;color:#000;">250</div>
<div class="a t" style="left:850.30px;width:40px;text-align:center;top:427.59px;font-size:12.3px;font-weight:normal;color:#000;">300</div>
<div class="a t" style="left:877.90px;width:40px;text-align:center;top:427.59px;font-size:12.3px;font-weight:normal;color:#000;">350</div>
<div class="a t" style="left:905.50px;width:40px;text-align:center;top:427.59px;font-size:12.3px;font-weight:normal;color:#000;">400</div>
<div class="a t" style="left:933.10px;width:40px;text-align:center;top:427.59px;font-size:12.3px;font-weight:normal;color:#000;">450</div>
<div class="a t" style="left:960.70px;width:40px;text-align:center;top:427.59px;font-size:12.3px;font-weight:normal;color:#000;">500</div>
<div class="a t" style="left:988.30px;width:40px;text-align:center;top:427.59px;font-size:12.3px;font-weight:normal;color:#000;">550</div>
<div class="a t" style="left:1015.90px;width:40px;text-align:center;top:427.59px;font-size:12.3px;font-weight:normal;color:#000;">600</div>
<div class="a t" style="left:1043.50px;width:40px;text-align:center;top:427.59px;font-size:12.3px;font-weight:normal;color:#000;">650</div>
<div class="a t" style="left:1071.10px;width:40px;text-align:center;top:427.59px;font-size:12.3px;font-weight:normal;color:#000;">700</div>
<div class="a t" style="left:1098.70px;width:40px;text-align:center;top:427.59px;font-size:12.3px;font-weight:normal;color:#000;">750</div>
<div class="a t" style="left:1126.30px;width:40px;text-align:center;top:427.59px;font-size:12.3px;font-weight:normal;color:#000;">800</div>
<div class="a t" style="left:1153.90px;width:40px;text-align:center;top:427.59px;font-size:12.3px;font-weight:normal;color:#000;">850</div>
<div class="a t" style="left:1181.50px;width:40px;text-align:center;top:427.59px;font-size:12.3px;font-weight:normal;color:#000;">900</div>
<div class="a t" style="left:722.50px;width:60px;text-align:right;top:289.09px;font-size:12.3px;font-weight:normal;color:#000;">12500</div>
<div class="a t" style="left:722.50px;width:60px;text-align:right;top:313.64px;font-size:12.3px;font-weight:normal;color:#000;">10000</div>
<div class="a t" style="left:722.50px;width:60px;text-align:right;top:338.19px;font-size:12.3px;font-weight:normal;color:#000;">7500</div>
<div class="a t" style="left:722.50px;width:60px;text-align:right;top:362.74px;font-size:12.3px;font-weight:normal;color:#000;">5000</div>
<div class="a t" style="left:722.50px;width:60px;text-align:right;top:387.29px;font-size:12.3px;font-weight:normal;color:#000;">2500</div>
<div class="a t" style="left:722.50px;width:60px;text-align:right;top:411.84px;font-size:12.3px;font-weight:normal;color:#000;">0</div>
<div class="a t" style="left:687.50px;width:100px;text-align:center;top:344.72px;font-size:12.5px;font-weight:normal;color:#000;transform:rotate(-90deg)">Intensity</div>
<div class="a t" style="left:895.00px;width:200px;text-align:center;top:446.16px;font-size:12.8px;font-weight:normal;color:#000;">Wavelength (nm)</div>
<div class="a" style="left:721px;top:472px;width:56px;height:21px;border:1px solid #707070;border-radius:3px;background:linear-gradient(180deg,#f2f2f2 0,#ebebeb 48%,#dddddd 52%,#cfcfcf 100%)"></div>
<div class="a t" style="left:721.00px;width:58px;text-align:center;top:478.50px;font-size:13px;font-weight:normal;color:#000;">Zoom</div>
<div class="a" style="left:782px;top:472px;width:56px;height:21px;border:1px solid #707070;border-radius:3px;background:linear-gradient(180deg,#f2f2f2 0,#ebebeb 48%,#dddddd 52%,#cfcfcf 100%)"></div>
<div class="a t" style="left:782.00px;width:58px;text-align:center;top:479.34px;font-size:12px;font-weight:normal;color:#000;">Pan</div>
<div class="a" style="left:844px;top:472px;width:56px;height:21px;border:1px solid #707070;border-radius:3px;background:linear-gradient(180deg,#f2f2f2 0,#ebebeb 48%,#dddddd 52%,#cfcfcf 100%)"></div>
<div class="a t" style="left:844.00px;width:58px;text-align:center;top:478.92px;font-size:12.5px;font-weight:normal;color:#000;">Full View</div>
<div class="a" style="left:915px;top:472px;width:54px;height:21px;border:1px solid rgba(0,0,0,0.35);border-radius:3px;background:linear-gradient(180deg,#5a2880 0,#5a2880 15%,#9a9a9a 50%,#5a2880 85%,#5a2880 100%)"></div>
<div class="a t" style="left:914.00px;width:56px;text-align:center;top:479.42px;font-size:12.5px;font-weight:normal;color:#000;color:#1a1a1a">R1</div>
<div class="a" style="left:977px;top:472px;width:54px;height:21px;border:1px solid rgba(0,0,0,0.35);border-radius:3px;background:linear-gradient(180deg,#2a4870 0,#2a4870 15%,#9a9a9a 50%,#2a4870 85%,#2a4870 100%)"></div>
<div class="a t" style="left:976.00px;width:56px;text-align:center;top:479.42px;font-size:12.5px;font-weight:normal;color:#000;color:#1a1a1a">R2</div>
<div class="a" style="left:1039px;top:472px;width:54px;height:21px;border:1px solid rgba(0,0,0,0.35);border-radius:3px;background:linear-gradient(180deg,#0a6a0a 0,#0a6a0a 15%,#9a9a9a 50%,#0a6a0a 85%,#0a6a0a 100%)"></div>
<div class="a t" style="left:1038.00px;width:56px;text-align:center;top:479.42px;font-size:12.5px;font-weight:normal;color:#000;color:#1a1a1a">R3</div>
<div class="a" style="left:1101px;top:472px;width:54px;height:21px;border:1px solid rgba(0,0,0,0.35);border-radius:3px;background:linear-gradient(180deg,#8a8a10 0,#8a8a10 15%,#9a9a9a 50%,#8a8a10 85%,#8a8a10 100%)"></div>
<div class="a t" style="left:1100.00px;width:56px;text-align:center;top:479.42px;font-size:12.5px;font-weight:normal;color:#000;color:#1a1a1a">R4</div>
<div class="a" style="left:1163px;top:472px;width:54px;height:21px;border:1px solid rgba(0,0,0,0.35);border-radius:3px;background:linear-gradient(180deg,#880a0a 0,#880a0a 15%,#9a9a9a 50%,#880a0a 85%,#880a0a 100%)"></div>
<div class="a t" style="left:1162.00px;width:56px;text-align:center;top:479.42px;font-size:12.5px;font-weight:normal;color:#000;color:#1a1a1a">R5</div>
<div class="a t" style="left:816.5px;top:532.42px;font-size:12.5px;font-weight:normal;color:#000;">Species</div>
<div class="a" style="left:865px;top:524px;width:238px;height:23px;border:1px solid #a3a3a3;background:#f0f0f0"></div>
<div class="a t" style="left:869px;top:531.42px;font-size:12.5px;font-weight:normal;color:#000;">H (434.0), N2 (434.4)</div>
<div class="a" style="left:685px;top:585px;width:562px;height:321px;border:1px solid #d9dadb;border-radius:2px;background:#fff"></div>
<div class="a" style="left:693px;top:594px;width:136px;height:20px;border:1px solid #707070;border-radius:3px;background:linear-gradient(180deg,#f2f2f2 0,#ebebeb 48%,#dddddd 52%,#cfcfcf 100%)"></div>
<div class="a t" style="left:692.00px;width:140px;text-align:center;top:600.50px;font-size:13px;font-weight:normal;color:#000;">Switch to Workbench</div>
<div class="a" style="left:1110px;top:594px;width:119px;height:21px;border:1px solid #3c7fb1;border-radius:3px;background:linear-gradient(180deg,#e5f3fb 0,#c4e5f6 48%,#98d1ef 52%,#6cbbe6 100%)"></div>
<div class="a t" style="left:1110.50px;width:120px;text-align:center;top:602.42px;font-size:12.5px;font-weight:normal;color:#000;">Display Signals</div>
<div class="a" style="left:745px;top:665px;width:82px;height:22px;border:1px solid #a3a3a3;background:#f0f0f0"></div>
<div class="a t" style="left:742.00px;width:90px;text-align:center;top:672.42px;font-size:12.5px;font-weight:normal;color:#000;">467.057</div>
<div class="a t" style="left:737.00px;width:100px;text-align:center;top:650.42px;font-size:12.5px;font-weight:normal;color:#000;">Raw</div>
<div class="a" style="left:841px;top:665px;width:82px;height:22px;border:1px solid #a3a3a3;background:#f0f0f0"></div>
<div class="a t" style="left:838.00px;width:90px;text-align:center;top:672.42px;font-size:12.5px;font-weight:normal;color:#000;">464.121</div>
<div class="a t" style="left:833.00px;width:100px;text-align:center;top:650.42px;font-size:12.5px;font-weight:normal;color:#000;">Smoothed</div>
<div class="a" style="left:937px;top:665px;width:82px;height:22px;border:1px solid #a3a3a3;background:#f0f0f0"></div>
<div class="a t" style="left:934.00px;width:90px;text-align:center;top:672.42px;font-size:12.5px;font-weight:normal;color:#000;">-0.008</div>
<div class="a t" style="left:929.00px;width:100px;text-align:center;top:650.42px;font-size:12.5px;font-weight:normal;color:#000;">Differential</div>
<div class="a" style="left:1033px;top:665px;width:82px;height:22px;border:1px solid #a3a3a3;background:#f0f0f0"></div>
<div class="a t" style="left:1030.00px;width:90px;text-align:center;top:672.42px;font-size:12.5px;font-weight:normal;color:#000;">467.234</div>
<div class="a t" style="left:1025.00px;width:100px;text-align:center;top:650.42px;font-size:12.5px;font-weight:normal;color:#000;">Envelope</div>
<div class="a" style="left:1129px;top:665px;width:82px;height:22px;border:1px solid #a3a3a3;background:#f0f0f0"></div>
<div class="a t" style="left:1126.00px;width:90px;text-align:center;top:672.42px;font-size:12.5px;font-weight:normal;color:#000;">-0.000</div>
<div class="a t" style="left:1121.00px;width:100px;text-align:center;top:633.42px;font-size:12.5px;font-weight:normal;color:#000;">Envelope</div>
<div class="a t" style="left:1121.00px;width:100px;text-align:center;top:650.42px;font-size:12.5px;font-weight:normal;color:#000;">Slope</div>
<div class="a t" style="left:698.5px;top:702.46px;font-size:12.45px;font-weight:bold;color:#000;">Processed Data</div>
<div class="a" style="left:780px;top:726px;width:370px;height:136px;background:#000"></div>
<svg class="a" style="left:780px;top:726px;" width="370" height="136" viewBox="0 0 370 136"><path d="M1 2.3 H66 L69 1.5 L72 2.3 H365 L367 1.5" fill="none" stroke="#e6d050" stroke-width="1.3"/><path d="M1 93.3 H226 L229 92.5 L232 93.3 H366" fill="none" stroke="#78c850" stroke-width="1.3"/><line x1="1" y1="106.5" x2="366" y2="106.5" stroke="#c83a3a" stroke-width="1.3"/><path d="M1 109.3 H50 L53 108.5 L56 109.3 H78 L81 108.5 L84 109.3 H366" fill="none" stroke="#6a98d8" stroke-width="1.3"/><line x1="1" y1="114.5" x2="366" y2="114.5" stroke="#9038c8" stroke-width="1.3"/></svg>
<div class="a t" style="left:716.50px;width:60px;text-align:right;top:723.09px;font-size:12.3px;font-weight:normal;color:#000;">3000</div>
<div class="a t" style="left:716.50px;width:60px;text-align:right;top:745.39px;font-size:12.3px;font-weight:normal;color:#000;">2500</div>
<div class="a t" style="left:716.50px;width:60px;text-align:right;top:767.69px;font-size:12.3px;font-weight:normal;color:#000;">2000</div>
<div class="a t" style="left:716.50px;width:60px;text-align:right;top:789.99px;font-size:12.3px;font-weight:normal;color:#000;">1500</div>
<div class="a t" style="left:716.50px;width:60px;text-align:right;top:812.29px;font-size:12.3px;font-weight:normal;color:#000;">1000</div>
<div class="a t" style="left:716.50px;width:60px;text-align:right;top:834.59px;font-size:12.3px;font-weight:normal;color:#000;">500</div>
<div class="a t" style="left:716.50px;width:60px;text-align:right;top:856.89px;font-size:12.3px;font-weight:normal;color:#000;">0</div>
<div class="a t" style="left:1157px;top:723.09px;font-size:12.3px;font-weight:normal;color:#000;">0.5</div>
<div class="a t" style="left:1157px;top:749.79px;font-size:12.3px;font-weight:normal;color:#000;">0.25</div>
<div class="a t" style="left:1157px;top:776.49px;font-size:12.3px;font-weight:normal;color:#000;">0</div>
<div class="a t" style="left:1157px;top:803.19px;font-size:12.3px;font-weight:normal;color:#000;">-0.25</div>
<div class="a t" style="left:1157px;top:829.89px;font-size:12.3px;font-weight:normal;color:#000;">-0.5</div>
<div class="a t" style="left:1157px;top:856.59px;font-size:12.3px;font-weight:normal;color:#000;">-0.75</div>
<svg class="a" style="left:770px;top:862px;" width="390" height="6" viewBox="0 0 390 6"><line x1="10.5" y1="0" x2="10.5" y2="5" stroke="#000" stroke-width="1.2"/><line x1="379" y1="0" x2="379" y2="5" stroke="#000" stroke-width="1.2"/></svg>
<div class="a t" style="left:765.00px;width:30px;text-align:center;top:872.59px;font-size:12.3px;font-weight:normal;color:#000;">0</div>
<div class="a t" style="left:1128.00px;width:40px;text-align:center;top:872.59px;font-size:12.3px;font-weight:normal;color:#000;">100</div>
<div class="a t" style="left:914.00px;width:100px;text-align:center;top:890.58px;font-size:12.9px;font-weight:bold;color:#000;">Sample #</div>
<div class="a t" style="left:667.50px;width:140px;text-align:center;top:786.58px;font-size:12.9px;font-weight:bold;color:#000;transform:rotate(-90deg)">Smoothed / <span style="color:#ee8416">Envelope</span></div>
<div class="a t" style="left:1129.50px;width:140px;text-align:center;top:787.08px;font-size:12.9px;font-weight:bold;color:#000;transform:rotate(90deg);color:#e77bbd"><span style="color:#4aa0e6">Diff /</span> Envelope Slope</div>
<div class="a" style="left:1302px;top:32px;width:16px;height:984px;background:#ececec"></div>
<svg class="a" style="left:1305px;top:37px;" width="10" height="8" viewBox="0 0 10 8"><path d="M1 6 L5 2 L9 6 Z" fill="#333"/></svg>
<div class="a" style="left:1302px;top:60px;width:13px;height:933px;border:1px solid #a0a0a0;border-radius:2px;background:linear-gradient(90deg,#f6f6f6 0,#eaeaea 40%,#d0d0d4 60%,#c8c8cc 90%,#d8d8d8 100%)"></div>
<svg class="a" style="left:1304px;top:521px;" width="12" height="12" viewBox="0 0 12 12"><path d="M2 2.6 H8.5 M2 5.7 H8.5 M2 8.8 H8.5" stroke="#444" stroke-width="1.2"/></svg>
<svg class="a" style="left:1305px;top:1003px;" width="10" height="8" viewBox="0 0 10 8"><path d="M1 2 L5 6 L9 2 Z" fill="#333"/></svg>
<div class="a" style="left:10px;top:1016px;width:1292px;height:16px;background:#ececec"></div>
<svg class="a" style="left:13px;top:1019px;" width="8" height="10" viewBox="0 0 8 10"><path d="M6 1 L2 5 L6 9 Z" fill="#333"/></svg>
<div class="a" style="left:34px;top:1016px;width:1247px;height:13px;border:1px solid #a0a0a0;border-radius:2px;background:linear-gradient(180deg,#f6f6f6 0,#eaeaea 40%,#d0d0d4 60%,#c8c8cc 90%,#d8d8d8 100%)"></div>
<svg class="a" style="left:652px;top:1019px;" width="12" height="10" viewBox="0 0 12 10"><path d="M3.3 1 V7.5 M6.3 1 V7.5 M9.3 1 V7.5" stroke="#3a3a3a" stroke-width="1.1"/></svg>
<svg class="a" style="left:1289px;top:1019px;" width="8" height="10" viewBox="0 0 8 10"><path d="M2 1 L6 5 L2 9 Z" fill="#333"/></svg>
<svg class="a" style="left:1305px;top:1019px;" width="12" height="12" viewBox="0 0 12 12"><g fill="#999"><rect x="9" y="2" width="1.5" height="1.5"/><rect x="6" y="5" width="1.5" height="1.5"/><rect x="9" y="5" width="1.5" height="1.5"/><rect x="3" y="8" width="1.5" height="1.5"/><rect x="6" y="8" width="1.5" height="1.5"/><rect x="9" y="8" width="1.5" height="1.5"/></g></svg>
</body></html>
